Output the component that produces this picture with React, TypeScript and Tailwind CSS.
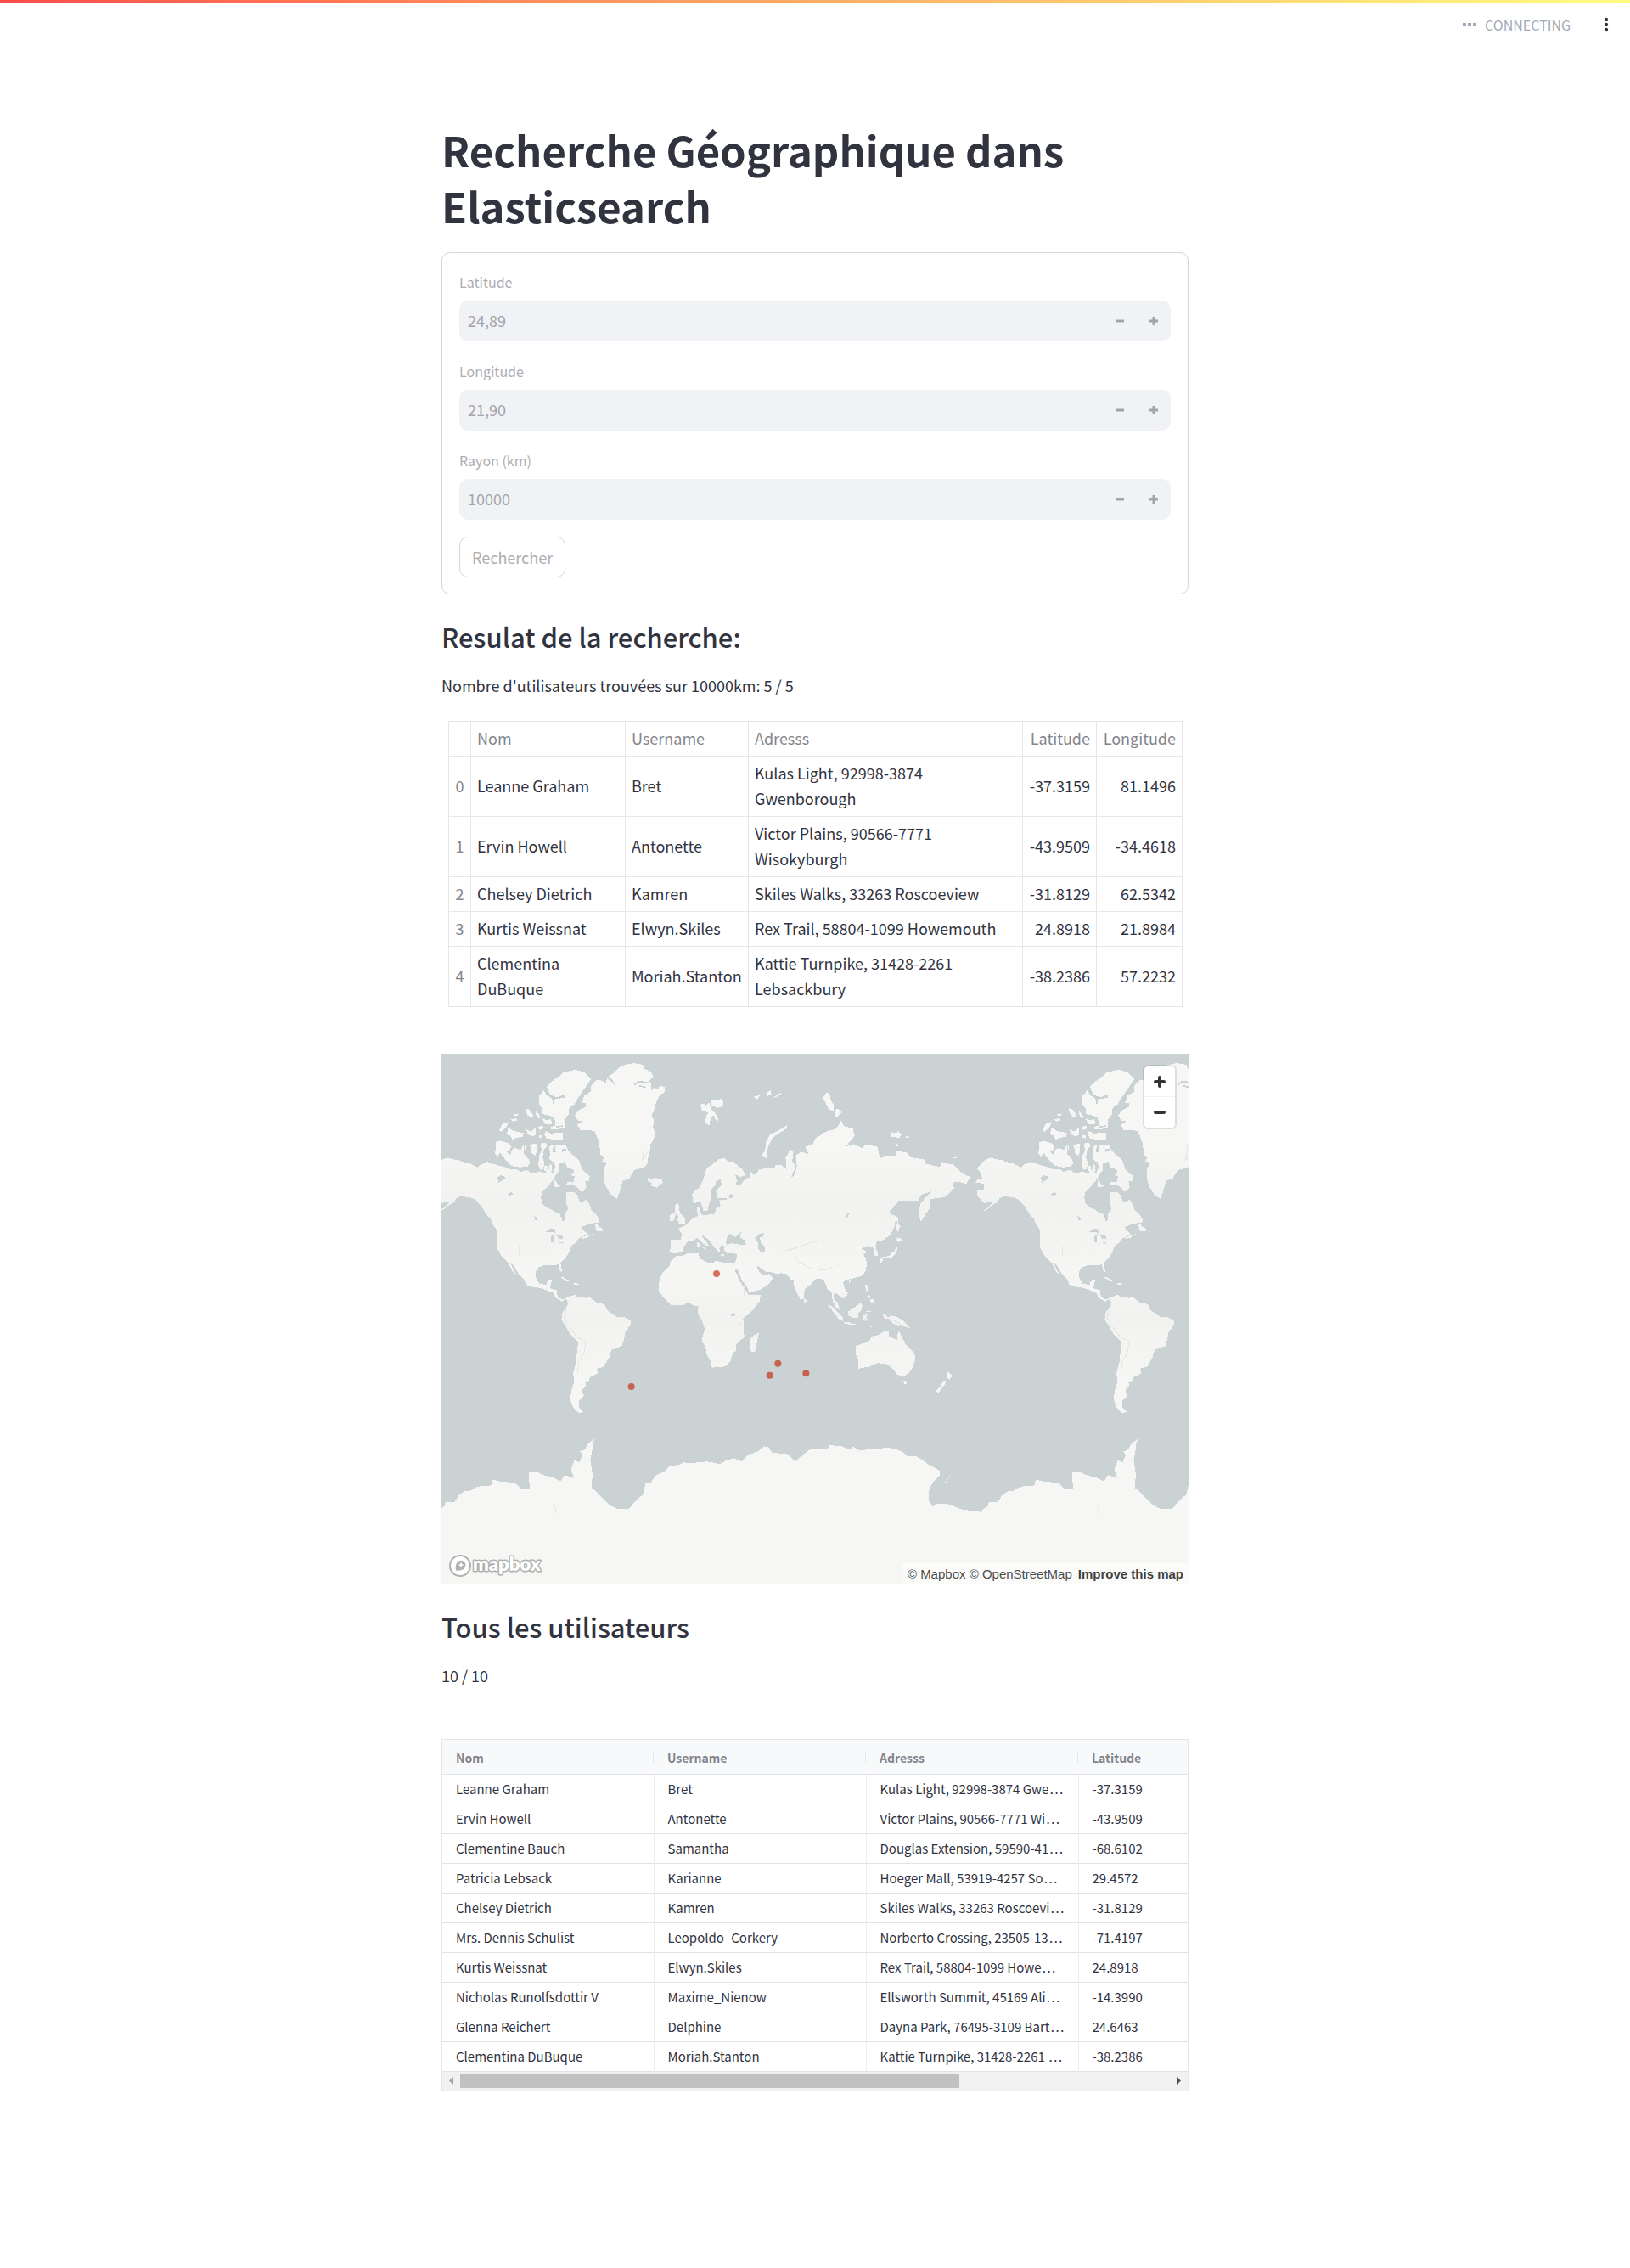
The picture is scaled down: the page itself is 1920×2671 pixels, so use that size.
import React from "react";

const fields = [
  { id: "latitude", label: "Latitude", value: "24,89" },
  { id: "longitude", label: "Longitude", value: "21,90" },
  { id: "rayon", label: "Rayon (km)", value: "10000" },
];

const results = [
  ["Leanne Graham", "Bret", "Kulas Light, 92998-3874 Gwenborough", "-37.3159", "81.1496"],
  ["Ervin Howell", "Antonette", "Victor Plains, 90566-7771 Wisokyburgh", "-43.9509", "-34.4618"],
  ["Chelsey Dietrich", "Kamren", "Skiles Walks, 33263 Roscoeview", "-31.8129", "62.5342"],
  ["Kurtis Weissnat", "Elwyn.Skiles", "Rex Trail, 58804-1099 Howemouth", "24.8918", "21.8984"],
  ["Clementina DuBuque", "Moriah.Stanton", "Kattie Turnpike, 31428-2261 Lebsackbury", "-38.2386", "57.2232"],
];

const users = [
  ["Leanne Graham", "Bret", "Kulas Light, 92998-3874 Gwe", "-37.3159"],
  ["Ervin Howell", "Antonette", "Victor Plains, 90566-7771 Wi", "-43.9509"],
  ["Clementine Bauch", "Samantha", "Douglas Extension, 59590-41", "-68.6102"],
  ["Patricia Lebsack", "Karianne", "Hoeger Mall, 53919-4257 So", "29.4572"],
  ["Chelsey Dietrich", "Kamren", "Skiles Walks, 33263 Roscoevi", "-31.8129"],
  ["Mrs. Dennis Schulist", "Leopoldo_Corkery", "Norberto Crossing, 23505-13", "-71.4197"],
  ["Kurtis Weissnat", "Elwyn.Skiles", "Rex Trail, 58804-1099 Howe", "24.8918"],
  ["Nicholas Runolfsdottir V", "Maxime_Nienow", "Ellsworth Summit, 45169 Ali", "-14.3990"],
  ["Glenna Reichert", "Delphine", "Dayna Park, 76495-3109 Bart", "24.6463"],
  ["Clementina DuBuque", "Moriah.Stanton", "Kattie Turnpike, 31428-2261 ", "-38.2386"],
];

/* One copy of the world is 1920 units wide. */
function World() {
  return (
    <g id="world">
      <g fill="url(#relief)">
        {/* Americas */}
        <path d="M0 378L20 370L40 376L60 378L78 388L100 391L127 404L140 394L160 388L176 390L200 397L226 404L240 412L262 410L280 420L300 414L318 424L345 420L366 424L380 412L394 424L402 404L398 386L418 390L418 414L404 432L396 446L384 462L370 478L355 492L352 512L356 532L372 546L390 554L400 562L418 568L428 596L436 590L434 570L448 552L440 530L442 492L470 492L482 505L486 522L498 530L510 516L522 534L530 556L545 568L558 588L556 600L520 603L506 612L494 614L500 626L514 640L498 650L486 656L476 668L458 684L450 706L436 728L421 742L426 776L418 768L414 748L390 750L366 750L342 758L334 772L334 795L346 815L370 819L376 806L390 804L384 832L408 838L410 860L424 870L438 868L448 862L470 855L486 864L512 866L524 862L548 882L576 888L586 910L620 932L648 934L668 946L668 962L650 985L644 1015L638 1036L600 1050L592 1078L572 1110L550 1115L552 1132L524 1146L522 1158L508 1164L510 1178L497 1192L503 1210L486 1230L487 1255L500 1268L485 1274L466 1255L455 1222L460 1190L468 1165L466 1130L476 1090L483 1020L455 994L438 964L424 944L428 916L442 902L446 880L440 870L424 878L402 864L394 848L370 838L345 830L318 826L298 818L292 800L272 780L258 756L244 740L252 764L268 788L250 770L236 740L212 718L196 688L195 626L180 604L174 588L160 572L140 540L122 520L106 512L68 506L52 514L44 528L24 540L2 558L-8 560L10 546L32 524L12 526L0 532L-18 516L-28 500L-26 486L-4 482L-4 462L-34 458L-24 446L-8 444L-18 420L-30 408L-12 392Z" />
        {/* Greenland */}
        <path d="M472 220L482 205L512 190L510 178L496 176L504 152L528 136L530 112L548 96L570 98L580 106L586 90L604 104L614 118L606 98L590 84L610 70L626 52L650 42L680 36L714 42L716 54L742 70L748 86L732 98L742 106L740 134L752 122L764 130L772 116L790 120L790 136L768 154L754 188L750 208L742 216L750 238L748 262L756 284L748 310L738 324L736 358L728 372L730 388L718 404L682 414L664 444L640 452L630 490L620 515L598 500L580 470L572 440L574 410L584 390L566 384L576 368L562 360L558 320L548 292L540 276L514 272L490 272L480 254L500 242L480 238Z" />
        {/* Ellesmere and Devon */}
        <path d="M372 120L386 104L414 84L432 68L474 60L506 68L528 92L520 106L500 134L484 158L470 182L452 192L450 218L436 234L436 262L414 270L376 268L402 256L400 230L384 222L358 216L356 196L344 178L344 154L362 132L372 150L390 160L396 188L400 164L436 158L436 148L408 156L384 148Z" />
        <path d="M368 276L386 284L428 282L428 306L374 304L364 290ZM204 272L216 250L236 244L232 258L212 278ZM232 282L236 264L256 276L276 280L290 282L288 296L262 300L252 308L244 292L230 288ZM296 196L308 198L322 216L324 230L304 222ZM332 206L346 218L348 232L336 228ZM254 218L272 214L268 222L256 220ZM246 236L262 230L268 238L254 242ZM300 270L318 278L332 264L334 290L318 296L304 284ZM342 262L358 256L360 268L346 272ZM344 290L358 290L356 302L344 300ZM354 230L372 238L388 234L390 252L368 252Z" />
        {/* Victoria and Banks */}
        <path d="M192 316L206 310L234 318L246 326L244 340L230 350L242 362L250 342L262 336L280 344L290 324L296 328L298 362L314 386L304 402L276 404L246 398L228 380L218 366L206 352L200 366L190 356ZM312 326L326 320L336 322L334 364L320 356L316 336ZM350 320L370 318L372 330L360 346L358 370L364 388L360 410L348 414L342 392L346 360L354 346Z" />
        {/* Baffin */}
        <path d="M380 330L396 326L392 350L404 350L402 328L440 326L448 344L464 360L484 376L492 396L496 412L524 436L520 454L508 452L512 472L504 488L490 488L478 472L460 464L442 464L444 456L468 456L470 436L458 432L470 420L464 410L446 408L438 388L410 390L396 386L380 374L384 356ZM400 446L410 462L424 472L398 474ZM382 396L388 392L392 416L382 420ZM364 398L376 400L374 420L362 416Z" />
        {/* Atlantic islands and Caribbean */}
        <path d="M540 608L552 606L556 614L568 618L570 630L540 628L546 618ZM494 652L512 646L534 640L514 654L500 656ZM420 792L434 794L452 806L440 806ZM468 812L488 816L482 819L468 818ZM730 442L740 446L756 442L780 444L782 460L760 476L738 468L744 460L730 454ZM534 1238L544 1238L544 1242L534 1242Z" />
        {/* British Isles */}
        <path d="M824 540L836 530L842 544L838 552L848 570L862 586L860 602L830 606L840 598L832 590L838 580L826 568ZM808 572L820 562L828 572L822 592L806 594Z" />
        {/* Eurasia and Africa */}
        <path d="M886 500L896 486L912 476L926 444L938 406L960 392L980 376L1000 372L1014 384L1030 384L1064 412L1074 432L1056 438L1038 430L1044 448L1040 466L1056 468L1074 444L1092 440L1090 412L1098 430L1112 430L1122 412L1160 406L1182 408L1178 396L1200 396L1220 412L1216 370L1232 342L1242 346L1240 384L1252 400L1236 440L1248 432L1256 400L1252 362L1270 350L1296 356L1286 332L1312 322L1322 302L1350 284L1366 276L1395 268L1412 240L1424 260L1454 266L1460 294L1428 332L1456 322L1486 336L1500 324L1540 332L1550 374L1568 362L1604 362L1604 344L1642 352L1660 370L1704 376L1712 392L1760 402L1768 388L1808 394L1838 424L1868 438L1856 462L1830 456L1806 458L1812 480L1778 510L1728 516L1726 548L1710 570L1695 596L1688 580L1688 556L1694 530L1732 488L1706 498L1696 502L1684 522L1616 522L1580 566L1606 576L1602 610L1588 642L1560 662L1538 668L1534 682L1544 718L1532 718L1524 684L1508 682L1484 692L1504 702L1492 712L1504 740L1500 768L1486 788L1456 796L1430 802L1420 812L1422 826L1436 848L1434 858L1418 868L1404 856L1388 846L1386 868L1400 884L1408 908L1396 902L1382 876L1380 848L1362 832L1360 820L1350 800L1324 798L1312 812L1284 834L1280 866L1270 874L1258 850L1248 830L1244 804L1234 802L1222 782L1200 778L1184 780L1160 774L1142 772L1128 760L1114 752L1118 766L1130 782L1142 786L1158 780L1172 796L1158 816L1132 834L1088 848L1080 828L1062 804L1046 764L1036 764L1050 798L1064 822L1086 856L1128 856L1124 878L1096 914L1066 938L1068 968L1070 1004L1042 1028L1042 1052L1030 1058L1022 1088L1002 1108L956 1112L952 1090L938 1068L934 1042L920 1014L930 974L922 948L906 922L908 896L888 892L874 880L856 890L812 892L788 868L768 842L770 798L784 774L806 752L810 736L828 718L852 716L872 708L908 708L914 728L936 738L958 746L968 734L1000 742L1038 742L1046 710L1010 708L1000 700L998 682L986 682L982 690L984 706L974 698L962 684L946 662L926 646L922 650L932 664L948 682L936 682L918 668L904 654L890 662L874 664L856 684L850 704L826 709L808 704L810 660L846 660L850 638L836 622L864 608L882 588L906 576L902 546L910 542L912 562L922 574L940 572L966 568L970 548L986 540L982 520L1008 518L1010 512L974 514L970 490L990 464L986 448L972 450L966 470L950 486L950 520L940 556L926 560L918 530L908 524L896 532L888 524Z" />
        {/* Arctic islands */}
        <path d="M914 182L928 180L934 188L946 176L952 200L964 208L970 218L980 240L972 240L960 220L952 230L946 258L932 246L936 222L944 210L922 206ZM954 166L968 168L988 162L998 174L990 192L974 194L954 184ZM1102 154L1116 152L1126 148L1116 166ZM1150 142L1164 130L1166 150L1150 152ZM1174 156L1200 140L1200 146L1178 158ZM1134 358L1144 344L1146 318L1160 290L1194 272L1220 256L1222 266L1186 288L1170 300L1160 320L1150 344L1152 372L1138 368ZM1348 160L1360 140L1372 140L1374 164L1388 186L1384 206L1370 200L1358 178ZM1392 200L1402 198L1416 210L1400 224L1390 226ZM1590 280L1608 284L1612 276L1626 288L1618 300L1590 296ZM1640 292L1658 298L1640 300ZM1604 318L1618 328L1606 330ZM1810 368L1826 368L1820 372L1810 372Z" />
        {/* Mediterranean, Madagascar, Sri Lanka */}
        <path d="M902 668L910 668L912 684L902 686ZM918 684L934 688L930 694ZM988 712L1000 712L998 716L988 716ZM1090 1012L1102 998L1122 988L1118 1010L1108 1056L1094 1056L1090 1038ZM1282 868L1290 876L1286 886L1280 880Z" />
        {/* Japan and Sakhalin */}
        <path d="M1608 578L1614 584L1616 608L1622 614L1614 626L1614 636L1608 620L1610 600ZM1612 652L1626 656L1628 662L1616 668L1606 666ZM1606 680L1612 690L1606 710L1594 722L1582 724L1560 726L1556 720L1582 718L1590 706L1602 700ZM1552 724L1560 732L1552 742L1550 730Z" />
        {/* Maritime Southeast Asia */}
        <path d="M1364 890L1380 894L1398 914L1420 936L1420 948L1408 944L1388 922L1380 908ZM1420 952L1440 952L1468 960L1452 962L1424 956ZM1436 914L1450 906L1470 892L1482 882L1488 892L1484 908L1474 920L1472 936L1450 936L1438 926ZM1492 926L1508 924L1500 934L1508 944L1498 940L1500 950L1494 938L1490 946ZM1500 912L1518 912L1518 915L1500 915ZM1498 820L1504 820L1508 838L1500 844ZM1514 872L1528 868L1530 880L1518 884ZM1510 856L1518 864L1510 866ZM1498 788L1502 788L1500 794ZM1516 966L1524 968L1516 970ZM1558 922L1568 922L1576 934L1592 928L1612 934L1632 946L1644 958L1656 972L1644 970L1622 962L1612 966L1598 956L1580 940L1564 936ZM1440 802L1448 802L1440 816Z" />
        {/* Australia and New Zealand */}
        <path d="M1464 1036L1484 1028L1506 1022L1524 1000L1546 996L1562 984L1580 984L1580 1000L1610 1014L1614 982L1622 992L1630 1010L1640 1030L1654 1042L1672 1062L1674 1084L1664 1112L1654 1128L1638 1140L1608 1138L1600 1120L1586 1108L1570 1098L1542 1096L1524 1100L1514 1108L1472 1116L1474 1090L1464 1064ZM1630 1158L1642 1158L1644 1168L1638 1172ZM1786 1124L1806 1140L1796 1154L1790 1152L1788 1138ZM1774 1158L1782 1158L1780 1170L1756 1200L1746 1196L1764 1176Z" />
        {/* Antarctica */}
        <path d="M0 1608L12 1600L14 1588L46 1588L60 1564L78 1550L104 1546L128 1532L176 1528L180 1508L206 1514L250 1518L268 1526L280 1540L312 1538L308 1480L340 1480L354 1490L394 1500L420 1514L436 1492L468 1502L458 1470L470 1440L488 1446L498 1420L490 1408L504 1404L520 1378L544 1362L534 1378L534 1396L526 1440L534 1490L530 1536L562 1564L594 1598L618 1610L664 1610L680 1588L712 1560L722 1520L740 1518L756 1494L786 1480L806 1462L848 1452L856 1446L870 1450L940 1444L984 1452L1010 1438L1034 1432L1060 1444L1082 1422L1122 1406L1142 1390L1156 1394L1168 1412L1226 1418L1250 1444L1280 1418L1308 1398L1366 1398L1370 1386L1416 1390L1438 1402L1456 1392L1476 1404L1536 1400L1580 1394L1630 1408L1644 1424L1680 1426L1724 1456L1762 1476L1762 1492L1734 1520L1722 1548L1722 1580L1736 1604L1750 1594L1790 1594L1836 1612L1904 1622L1920 1608L1920 1880L0 1880Z" />
      </g>
      {/* Inland seas and lakes */}
      <path fill="#cad2d3" d="M1006 670L1008 652L1020 638L1030 648L1042 650L1058 634L1056 652L1074 664L1076 678L1042 676L1022 672L1010 680ZM1108 656L1124 640L1140 634L1136 648L1124 652L1130 674L1142 684L1142 706L1128 704L1118 688L1118 670ZM198 440L210 432L226 438L224 446L202 458ZM234 500L246 490L254 498L240 506ZM328 576L336 580L340 592L332 592ZM370 632L384 620L402 624L402 636L386 632ZM388 648L398 640L396 668L388 668ZM404 640L426 644L430 656L416 658ZM414 670L430 668L428 674ZM1014 506L1024 498L1032 508L1020 514ZM1022 924L1036 918L1038 928L1026 932ZM1426 584L1440 560L1438 578ZM426 340L440 338L440 348L426 350Z" />
      <path fill="none" stroke="#cad2d3" strokeWidth="5" d="M682 112L696 102L732 104M700 116L722 122M292 322L294 360M404 262L430 258M358 310L428 310" />
      {/* Mountain relief */}
      <path fill="none" stroke="#e5e5e3" strokeWidth="3" d="M448 880L440 910L432 935L446 960L480 1005L510 1018L504 1060L486 1090L480 1130M1214 698L1252 690L1300 672L1350 662M1244 716L1262 738L1300 760L1352 768L1380 756M1400 750L1410 736M275 680L275 716M718 320L710 380L728 350M1068 820L1070 860M1036 964L1060 955M1582 938L1620 956M400 1600L406 1626M1800 1490L1780 1520" />
    </g>
  );
}

function WorldMap() {
  return (
    <svg viewBox="0 3 2640 1875" className="block w-full" role="img" aria-label="Carte des utilisateurs" shapeRendering="crispEdges">
      <defs>
        <linearGradient id="relief" gradientUnits="userSpaceOnUse" x1="0" y1="0" x2="0" y2="1880">
          <stop offset="0.18" stopColor="#f6f6f4" />
          <stop offset="0.27" stopColor="#f2f2f0" />
          <stop offset="0.35" stopColor="#f3f3f1" />
          <stop offset="0.41" stopColor="#f6f6f4" />
          <stop offset="0.5" stopColor="#f2f2f0" />
          <stop offset="0.62" stopColor="#f6f6f4" />
        </linearGradient>
      </defs>
      <rect y="3" width="2640" height="1875" fill="#cad2d3" />
      <World />
      <use href="#world" x="1920" />
      <g fill="#c81e00" fillOpacity="0.627" shapeRendering="auto">
        <circle cx="972" cy="780" r="12" />
        <circle cx="671" cy="1179" r="12" />
        <circle cx="1160" cy="1139" r="12" />
        <circle cx="1189" cy="1097" r="12" />
        <circle cx="1288" cy="1132" r="12" />
      </g>
    </svg>
  );
}

function MapboxLogo() {
  return (
    <svg width="112" height="30" viewBox="0 0 112 30" aria-label="Mapbox">
      <circle cx="15" cy="15" r="12" fill="#fff" stroke="#b0b0ae" strokeWidth="2" />
      <path d="M10 20.5C9.2 16 10 12.500 12 10.500A5.400 5.400 0 0 1 20 18C18 20.200 14 21 10 20.500Z" fill="#b0b0ae" />
      <path d="M16 10.500L17 13L19.500 14L17 15L16 17.500L15 15L12.500 14L15 13Z" fill="#fff" />
      <text x="30" y="21" fontSize="22" fontWeight="800" fill="#fff" stroke="#b0b0ae" strokeWidth="3" strokeLinejoin="round" paintOrder="stroke" className="font-['Lato',sans-serif]">mapbox</text>
    </svg>
  );
}

function StepIcon({ plus }: { plus?: boolean }) {
  return (
    <svg width="12" height="12" viewBox="0 0 12 12" fill="none" stroke="currentColor" strokeWidth="3" aria-hidden="true">
      <path d={plus ? "M1 6H11M6 1V11" : "M1 6H11"} />
    </svg>
  );
}

export default function App() {
  return (
    <div className="min-h-screen bg-white font-['Noto_Sans_CJK_SC',sans-serif] text-lg text-[#31333f]">
      <header>
        <div className="h-[3px] bg-linear-to-r from-[#ff4b4b] to-[#fffd80]" />
        <div className="flex h-[52px] items-center justify-end pr-[18px] text-base text-[#a3a8b8]">
          <span className="flex gap-[2px]">
            <i className="size-1 bg-current" />
            <i className="size-1 bg-current" />
            <i className="size-1 bg-current" />
          </span>
          <span className="ml-[10px] leading-6">CONNECTING</span>
          <button type="button" aria-label="Menu" className="ml-8 flex w-5 justify-center text-[#31333f]">
            <svg width="6" height="18" viewBox="0 0 6 18" fill="currentColor">
              <circle cx="3" cy="3" r="2.2" />
              <circle cx="3" cy="9" r="2.2" />
              <circle cx="3" cy="15" r="2.2" />
            </svg>
          </button>
        </div>
      </header>

      <main className="mx-auto max-w-[880px] pt-[88px] pb-[210px]">
        <h1 className="text-[49px] leading-[66px] font-bold">Recherche Géographique dans Elasticsearch</h1>

        <form className="mt-[22px] flex flex-col gap-5 rounded-[10px] border border-[#d6d6d9] px-5 py-[19px]">
          {fields.map((f) => (
            <div key={f.id}>
              <label htmlFor={f.id} className="mb-[7px] block text-base leading-[30px] text-[#adadb2]">
                {f.label}
              </label>
              <div className="flex h-12 items-center rounded-[10px] bg-[#f0f2f6] text-[#a3a4ab]">
                <input id={f.id} defaultValue={f.value} disabled className="h-full min-w-0 flex-1 bg-transparent px-[10px] pb-[2px]" />
                <button type="button" disabled aria-label="Diminuer" className="flex h-full w-10 items-center justify-center">
                  <StepIcon />
                </button>
                <button type="button" disabled aria-label="Augmenter" className="flex h-full w-10 items-center justify-center">
                  <StepIcon plus />
                </button>
              </div>
            </div>
          ))}
          <button type="button" disabled className="h-12 self-start rounded-[10px] border border-[#d6d6d9] px-[14px] text-[#adadb2]">
            Rechercher
          </button>
        </form>

        <h2 className="mt-[29px] text-[31px] leading-[42px] font-medium">Resulat de la recherche:</h2>
        <p className="mt-5 leading-8">Nombre d'utilisateurs trouvées sur 10000km: 5 / 5</p>

        <div className="mt-[26px] pr-[7px] pl-2">
          <table className="w-full table-fixed border-collapse leading-[30px] [&_td]:border [&_td]:border-[#e6e6e9] [&_td]:px-[7px] [&_td]:pt-1 [&_td]:pb-[6px] [&_th]:border [&_th]:border-[#e6e6e9] [&_th]:px-[7px] [&_th]:pt-1 [&_th]:pb-[6px] [&_th]:font-normal [&_th]:text-[#83848c]">
            <colgroup>
              <col className="w-[26px]" />
              <col className="w-[182px]" />
              <col className="w-[145px]" />
              <col />
              <col className="w-[87px]" />
              <col className="w-[101px]" />
            </colgroup>
            <thead>
              <tr className="text-left">
                <th />
                <th>Nom</th>
                <th>Username</th>
                <th>Adresss</th>
                <th className="text-right">Latitude</th>
                <th className="text-right">Longitude</th>
              </tr>
            </thead>
            <tbody>
              {results.map((r, i) => (
                <tr key={r[0]}>
                  <th scope="row">{i}</th>
                  <td>{r[0]}</td>
                  <td>{r[1]}</td>
                  <td>{r[2]}</td>
                  <td className="text-right">{r[3]}</td>
                  <td className="text-right">{r[4]}</td>
                </tr>
              ))}
            </tbody>
          </table>
        </div>

        <div className="relative mt-[55px]">
          <WorldMap />
          <div className="absolute top-[15px] right-4 flex w-9 flex-col rounded-[4px] bg-white text-[#333] shadow-[0_0_0_2px_rgba(0,0,0,0.1)]">
            <button type="button" aria-label="Zoom in" className="flex h-9 items-center justify-center border-b border-[#f0f2f6]">
              <svg width="16" height="16" viewBox="0 0 16 16" fill="none" stroke="currentColor" strokeWidth="4" strokeLinecap="round">
                <path d="M3 8H13M8 3V13" />
              </svg>
            </button>
            <button type="button" aria-label="Zoom out" className="flex h-9 items-center justify-center">
              <svg width="16" height="16" viewBox="0 0 16 16" fill="none" stroke="currentColor" strokeWidth="4" strokeLinecap="round">
                <path d="M3 8H13" />
              </svg>
            </button>
          </div>
          <a href="#mapbox" className="absolute bottom-[7px] left-[7px]">
            <MapboxLogo />
          </a>
          <div className="absolute right-0 bottom-0 flex gap-[7px] bg-white/50 px-[6px] font-['Liberation_Sans',sans-serif] text-[15px] leading-[25px] text-[#4d4d4d]">
            <span>
              <a href="#mapbox">© Mapbox</a> <a href="#osm">© OpenStreetMap</a>
            </span>
            <a href="#improve" className="font-bold text-[#404040]">Improve this map</a>
          </div>
        </div>

        <h2 className="mt-[29px] text-[31px] leading-[42px] font-medium">Tous les utilisateurs</h2>
        <p className="mt-5 leading-8">10 / 10</p>

        <div className="mt-[55px] border-t border-[#dde2eb] pt-[3px]">
          <div className="overflow-hidden border border-[#e6e6ea]">
            <table className="w-full table-fixed border-collapse text-[15px]">
              <colgroup>
                <col className="w-[249px]" />
                <col className="w-[250px]" />
                <col className="w-[250px]" />
                <col />
              </colgroup>
              <thead>
                <tr className="h-10 border-b border-[#e2e4e9] bg-[#f8f9fb] text-left text-sm text-[#83848c]">
                  {["Nom", "Username", "Adresss", "Latitude"].map((h, i) => (
                    <th key={h} className="p-0 font-bold">
                      <div className={i < 3 ? "flex items-center justify-between pt-[2px] pl-4" : "pt-[2px] pl-4"}>
                        {h}
                        {i < 3 && <span className="h-3 w-px bg-[#e6e6ea]" />}
                      </div>
                    </th>
                  ))}
                </tr>
              </thead>
              <tbody>
                {users.map((u) => (
                  <tr key={u[0]} className="h-[35px] border-b border-[#dde2eb]">
                    {u.map((c, i) => (
                      <td key={i} className={i < 3 ? "border-r border-[#ececf0] p-0 pl-4 whitespace-nowrap" : "p-0 pl-4"}>
                        {c}
                        {i === 2 && <span className="font-['Liberation_Sans'] text-lg leading-4">…</span>}
                      </td>
                    ))}
                  </tr>
                ))}
              </tbody>
            </table>
            <div className="flex h-[22px] items-center bg-[#f1f1f1]">
              <svg width="21" height="17" viewBox="0 0 21 17" fill="#a3a3a3">
                <path d="M8 8.500L13 4V13Z" />
              </svg>
              <div className="h-[17px] flex-1">
                <div className="h-full w-[70.3%] bg-[#c1c1c1]" />
              </div>
              <svg width="21" height="17" viewBox="0 0 21 17" fill="#505050">
                <path d="M13 8.500L8 4V13Z" />
              </svg>
            </div>
          </div>
        </div>
      </main>
    </div>
  );
}
